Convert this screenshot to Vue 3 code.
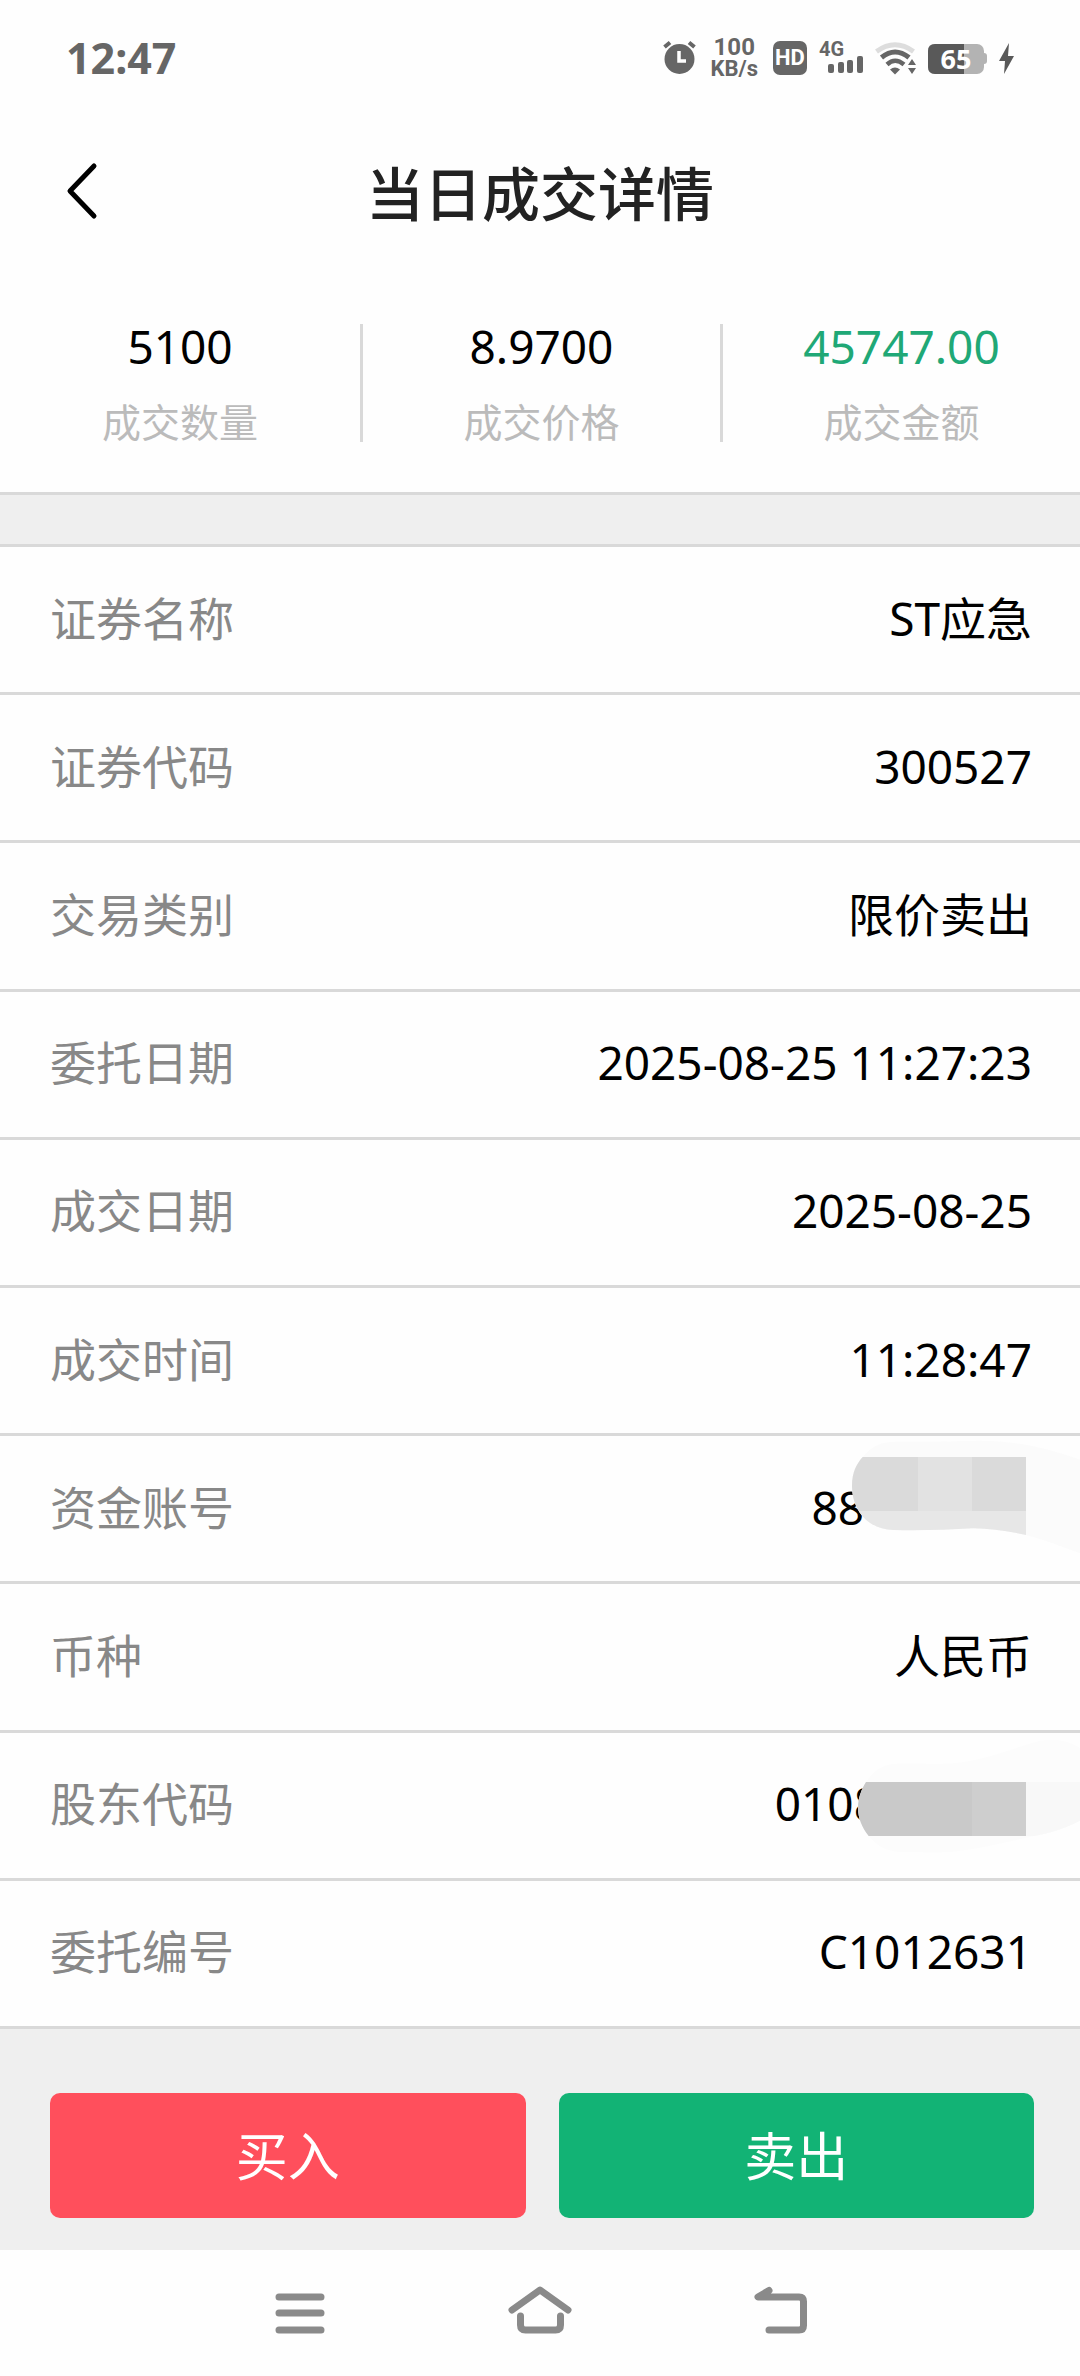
<template>
  <div class="page">
    <div class="status-bar">
      <span class="clock">12:47</span>
      <div class="status-icons">
        <svg width="33" height="34" viewBox="0 0 33 34">
          <circle cx="16.5" cy="18" r="15" fill="#666" />
          <path d="M1.5 6L7 1.5M31.5 6L26 1.5" stroke="#666" stroke-width="4" />
          <path d="M16 10v10h7" fill="none" stroke="#fff" stroke-width="3.5" />
        </svg>
        <div class="speed">
          <span class="speed-number">100</span>
          <span>KB/s</span>
        </div>
        <span class="hd">HD</span>
        <svg width="44" height="34" viewBox="0 0 44 34">
          <text x="0" y="15" class="net">4G</text>
          <rect x="9" y="23" width="6" height="9" rx="2" fill="#666" />
          <rect x="19" y="21" width="6" height="11" rx="2" fill="#666" />
          <rect x="28" y="19" width="6" height="13" rx="2" fill="#666" />
          <rect x="38" y="15" width="6" height="17" rx="2" fill="#666" />
        </svg>
        <svg width="41" height="34" viewBox="0 0 41 34">
          <path d="M1.5 10.5Q20 -3 38.5 10.5" fill="none" stroke="#ddd" stroke-width="5" />
          <path d="M6.5 16.5Q20 5.5 34 16.5" fill="none" stroke="#666" stroke-width="5" />
          <path d="M12 23.5Q20 16 29 23.5" fill="none" stroke="#666" stroke-width="4.5" />
          <path d="M15 28.5q5-4 10 0l-5 5z" fill="#666" />
          <path d="M33 24l4-6 4 6zM33 27h8l-4 6z" fill="#666" />
        </svg>
        <svg width="59" height="34" viewBox="0 0 59 34">
          <rect x="0" y="3" width="56" height="30" rx="7" fill="#b3b3b3" />
          <path d="M56 12q3 0 3 3v5q0 3-3 3z" fill="#b3b3b3" />
          <path d="M36 3v30H7q-7 0-7-7V10q0-7 7-7z" fill="#595959" />
          <text x="28" y="28" class="battery">65</text>
        </svg>
        <svg width="15" height="34" viewBox="0 0 15 34">
          <path d="M10 2L0 20h6l-1 13L15 15H9z" fill="#595959" />
        </svg>
      </div>
    </div>

    <header class="header">
      <button class="back" aria-label="返回">
        <svg width="32" height="56" viewBox="0 0 32 56">
          <path d="M28 3L4 28l24 25" fill="none" stroke="#000" stroke-width="5" stroke-linecap="round" stroke-linejoin="round" />
        </svg>
      </button>
      <h1>当日成交详情</h1>
    </header>

    <div class="stats">
      <div v-for="stat in stats" :key="stat.label" class="stat">
        <span class="stat-value" :class="{ green: stat.green }">{{ stat.value }}</span>
        <span class="stat-label">{{ stat.label }}</span>
      </div>
    </div>

    <dl class="details">
      <div v-for="row in rows" :key="row.label" class="row">
        <dt>{{ row.label }}</dt>
        <dd :class="row.mask">{{ row.value }}</dd>
        <svg v-if="row.mask === 'account'" class="mask" width="230" height="145" viewBox="270 21 690 435">
          <path :d="accountShape" fill="#fbfbfb" />
          <clipPath id="account-clip"><path :d="accountShape" /></clipPath>
          <g clip-path="url(#account-clip)">
            <rect x="270" y="84" width="204" height="162" fill="#dadada" />
            <rect x="474" y="84" width="162" height="162" fill="#e2e2e2" />
            <rect x="636" y="84" width="162" height="162" fill="#dadada" />
            <rect x="270" y="246" width="528" height="80" fill="#e7e7e7" />
          </g>
        </svg>
        <svg v-if="row.mask === 'holder'" class="mask" width="225" height="145" viewBox="345 39 675 435">
          <path :d="holderShape" fill="#fcfcfc" />
          <clipPath id="holder-clip"><path :d="holderShape" /></clipPath>
          <g clip-path="url(#holder-clip)">
            <rect x="345" y="186" width="351" height="162" fill="#c9c9c9" />
            <rect x="696" y="186" width="162" height="162" fill="#cecece" />
            <rect x="858" y="186" width="162" height="162" fill="#f8f8f8" />
          </g>
        </svg>
      </div>
    </dl>

    <div class="actions">
      <button class="buy">买入</button>
      <button class="sell">卖出</button>
    </div>

    <nav class="nav-bar">
      <button aria-label="菜单">
        <svg width="64" height="54" viewBox="0 0 64 54">
          <path d="M11 11h42M11 27h42M11 44h42" />
        </svg>
      </button>
      <button aria-label="主页">
        <svg width="64" height="54" viewBox="0 0 64 54">
          <path d="M4 24L32 4l28 20M12.5 30v9q0 5 5 5h30q5 0 5-5v-9" />
        </svg>
      </button>
      <button aria-label="后退">
        <svg width="64" height="54" viewBox="0 0 64 54">
          <path d="M21 4.5L10 11h41q4.5 0 4.5 4.5v24q0 4.5-4.5 4.5H21" />
        </svg>
      </button>
    </nav>
  </div>
</template>

<script setup>
const stats = [
  { value: '5100', label: '成交数量' },
  { value: '8.9700', label: '成交价格' },
  { value: '45747.00', label: '成交金额', green: true }
]

const rows = [
  { label: '证券名称', value: 'ST应急' },
  { label: '证券代码', value: '300527' },
  { label: '交易类别', value: '限价卖出' },
  { label: '委托日期', value: '2025-08-25 11:27:23' },
  { label: '成交日期', value: '2025-08-25' },
  { label: '成交时间', value: '11:28:47' },
  { label: '资金账号', value: '88', mask: 'account' },
  { label: '币种', value: '人民币' },
  { label: '股东代码', value: '0108', mask: 'holder' },
  { label: '委托编号', value: 'C1012631' }
]

// outlines of the strokes that hide the private numbers
const accountShape = 'M276 170C276 130 290 104 308 84C335 50 365 38 410 38C500 40 580 36 660 35C780 36 870 60 960 92V373C900 350 850 332 798 318C740 305 690 299 640 298C560 302 480 306 400 303C320 300 276 240 276 170Z'
const holderShape = 'M354 262C354 232 366 206 378 186C402 150 430 132 470 131C530 130 580 134 640 130C740 120 820 84 900 62C945 54 985 62 1020 84V302C975 326 930 338 884 348C800 366 720 386 640 395C580 398 530 396 470 395C430 390 408 374 386 348C366 322 354 296 354 262Z'
</script>

<style>
body {
  margin: 0;
  background: #fff;
}
</style>

<style scoped>
.page {
  display: flex;
  flex-direction: column;
  min-height: 100vh;
  background: #fefefe;
  color: #000;
  font-family: "Noto Sans", "Noto Sans CJK SC", sans-serif;
}

button {
  padding: 0;
  border: none;
  background: none;
  font-family: inherit;
  cursor: pointer;
}

svg {
  display: block;
  overflow: visible;
}

.status-bar {
  display: flex;
  justify-content: space-between;
  align-items: center;
  height: 115px;
  padding: 0 66px;
  color: #666;
}

.clock {
  font-size: 43px;
  line-height: 60px;
  font-weight: 700;
}

.status-icons {
  display: flex;
  align-items: center;
  gap: 12px;
}

.speed {
  display: flex;
  flex-direction: column;
  align-items: center;
  padding: 0 3px;
  font-family: Roboto, sans-serif;
  font-size: 22px;
  line-height: 22px;
  font-weight: 700;
}

.speed-number {
  font-size: 24px;
}

.hd {
  width: 34px;
  border-radius: 7px;
  background: #666;
  color: #fff;
  font-family: Roboto, sans-serif;
  font-size: 22px;
  line-height: 34px;
  font-weight: 700;
  text-align: center;
}

.net {
  font-family: Roboto, sans-serif;
  font-size: 20px;
  font-weight: 700;
  fill: #666;
}

.battery {
  font-size: 27px;
  font-weight: 700;
  text-anchor: middle;
  fill: #fff;
}

.header {
  position: relative;
  display: flex;
  justify-content: center;
  align-items: center;
  height: 152px;
  padding-bottom: 4px;
}

.back {
  position: absolute;
  left: 66px;
}

.header h1 {
  margin: 0;
  color: #222;
  font-size: 58px;
  font-weight: 500;
}

.stats {
  display: grid;
  grid-template-columns: repeat(3, 1fr);
  padding: 53px 0 50px;
}

.stat {
  display: flex;
  flex-direction: column;
  align-items: center;
  gap: 34px;
}

.stat + .stat {
  border-left: 3px solid #d9d9d9;
}

.stat-value {
  font-size: 46px;
  line-height: 44px;
}

.stat-value.green {
  color: #20a876;
}

.stat-label {
  color: #bbb;
  font-size: 39px;
  line-height: 40px;
}

.details {
  flex: 1;
  display: flex;
  flex-direction: column;
  margin: 0;
  border-top: 3px solid #d9d9d9;
}

.details::before {
  content: "";
  height: 49px;
  background: #efefef;
  border-bottom: 3px solid #d9d9d9;
}

.row {
  position: relative;
  flex: 1;
  display: flex;
  justify-content: space-between;
  align-items: center;
  padding: 0 48px 4px 50px;
  border-bottom: 3px solid #d9d9d9;
  font-size: 46px;
  line-height: 60px;
}

.row dt {
  color: #888;
}

.row dd {
  margin: 0;
}

.row dd.account {
  padding-right: 168px;
}

.row dd.holder {
  padding-right: 152px;
}

.mask {
  position: absolute;
  top: 0;
  right: 0;
}

.actions {
  display: flex;
  gap: 33px;
  padding: 64px 46px 32px 50px;
  background: #efefef;
}

.actions button {
  flex: 1;
  height: 125px;
  padding-bottom: 4px;
  border-radius: 10px;
  color: #fff;
  font-size: 52px;
}

.actions .buy {
  background: #ff4f5c;
}

.actions .sell {
  background: #12b375;
}

.nav-bar {
  display: flex;
  height: 126px;
  padding: 0 calc(100% / 6);
}

.nav-bar button {
  flex: 1;
  display: flex;
  justify-content: center;
  align-items: center;
}

.nav-bar path {
  fill: none;
  stroke: #8a8a8a;
  stroke-width: 7;
  stroke-linecap: round;
  stroke-linejoin: round;
}
</style>
